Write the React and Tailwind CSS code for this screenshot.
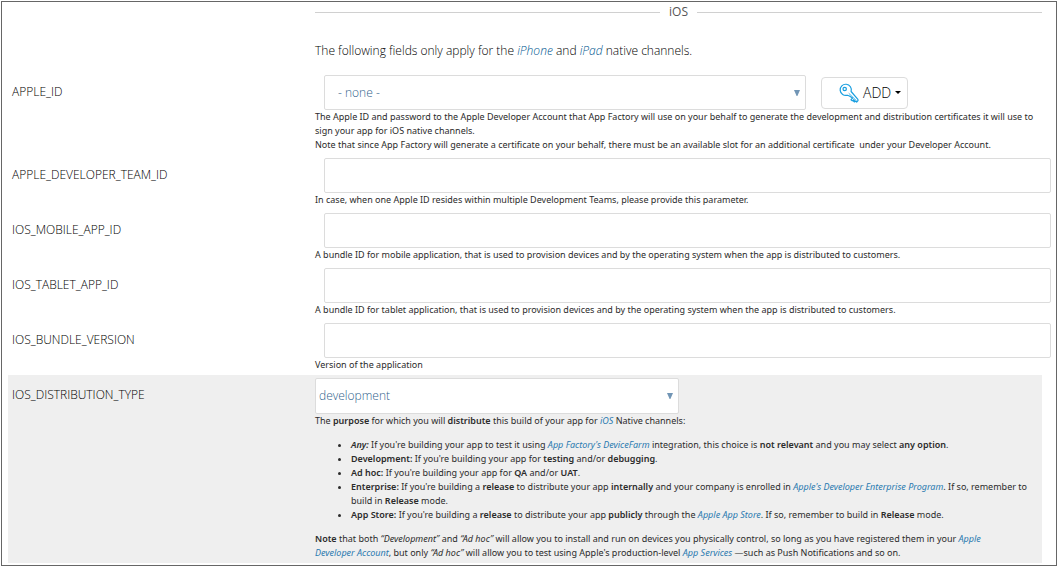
import React from "react";

function Link({ children, className = "text-[#2a7ab0]" }) {
  return (
    <a href="#" className={`italic ${className}`}>
      {children}
    </a>
  );
}

function B({ children }) {
  return <strong className="font-semibold">{children}</strong>;
}

function Arrow() {
  return (
    <svg
      viewBox="0 0 6 6"
      aria-hidden="true"
      className="pointer-events-none absolute top-1/2 right-1.5 h-1.5 w-1.5 -translate-y-1/2"
    >
      <path d="M0 0h6L3.4 6h-.8z" fill="#7195b5" />
    </svg>
  );
}

function KeyIcon() {
  return (
    <svg
      viewBox="0 0 20 20"
      aria-hidden="true"
      className="h-5 w-5"
      fill="none"
      stroke="#1a9fe0"
      strokeWidth="1.2"
      strokeLinejoin="round"
      strokeLinecap="round"
    >
      <path d="M12.1 8.5A5.6 5.6 0 1 0 8.4 12.2L10.4 13l3.2 2-1.6 1.7 1.3 1.2 1.5-1.2.6.6-.8 1 .9.7 1.2-.9 1 .9 1.3-1.3-.1-1.3z" />
      <circle cx="5.7" cy="6" r="1.7" />
      <path d="M10 10.5l7.4 7.2" strokeWidth="0.8" />
    </svg>
  );
}

function Row({ id, label, spacing = "pb-1.5", children }) {
  return (
    <div className={`flex ${spacing}`}>
      <label
        htmlFor={id}
        className="w-[307px] shrink-0 pt-[9px] pl-1 font-['Open_Sans',sans-serif] text-xs leading-4 font-light text-black"
      >
        {label}
      </label>
      <div className="min-w-0 flex-1">{children}</div>
    </div>
  );
}

function TextRow({ id, help, spacing }) {
  return (
    <Row id={id} label={id} spacing={spacing}>
      <div className="-mr-[9px] pl-[9px]">
        <input
          id={id}
          type="text"
          className="block h-[35px] w-full rounded-xs border border-[#dcdcdc] bg-white px-2 text-xs"
        />
      </div>
      <p>{help}</p>
    </Row>
  );
}

export default function App() {
  return (
    <div className="bg-white p-px font-['Noto_Sans','Open_Sans',sans-serif] text-[9px] leading-[14px] text-[#2b2b2b]">
      <main className="border border-[#666] pr-3.5 pb-0.5 pl-1.5">
        <div className="pl-[307px] font-['Open_Sans',sans-serif]">
          <div className="flex h-5 items-center gap-[9px]">
            <div className="h-px flex-1 bg-[#d0d0d0]" />
            <h2 className="text-xs leading-4 text-[#555]">iOS</h2>
            <div className="h-px flex-1 bg-[#d0d0d0]" />
          </div>
          <p className="pt-[21px] pb-4 text-xs leading-4 font-light text-black">
            The following fields only apply for the <Link className="text-[#00568f]">iPhone</Link> and{" "}
            <Link className="text-[#00568f]">iPad</Link> native channels.
          </p>
        </div>

        <Row id="APPLE_ID" label="APPLE_ID">
          <div className="flex items-center gap-[15px] pl-[9px]">
            <div className="relative w-[482px]">
              <select
                id="APPLE_ID"
                className="block h-[35px] w-full appearance-none rounded-xs border border-[#dcdcdc] bg-white px-[13px] font-['Open_Sans',sans-serif] text-xs font-light text-[#2f5f8c]"
              >
                <option>- none -</option>
              </select>
              <Arrow />
            </div>
            <button
              type="button"
              className="flex h-8 w-[87px] items-center gap-1 rounded-sm border border-[#dcdcdc] bg-white pl-[17px] font-['Open_Sans',sans-serif] text-sm font-light text-black"
            >
              <KeyIcon />
              ADD
              <svg viewBox="0 0 6 3" aria-hidden="true" className="h-[3px] w-1.5">
                <path d="M0 0h6L3 3z" fill="#000" />
              </svg>
            </button>
          </div>
          <p>
            The Apple ID and password to the Apple Developer Account that App Factory will use on your
            behalf to generate the development and distribution certificates it will use to sign your app
            for iOS native channels.
            <br />
            Note that since App Factory will generate a certificate on your behalf, there must be an
            available slot for an additional certificate&nbsp; under your Developer Account.
          </p>
        </Row>

        <TextRow
          id="APPLE_DEVELOPER_TEAM_ID"
          help="In case, when one Apple ID resides within multiple Development Teams, please provide this parameter."
        />
        <TextRow
          id="IOS_MOBILE_APP_ID"
          help="A bundle ID for mobile application, that is used to provision devices and by the operating system when the app is distributed to customers."
        />
        <TextRow
          id="IOS_TABLET_APP_ID"
          help="A bundle ID for tablet application, that is used to provision devices and by the operating system when the app is distributed to customers."
        />
        <TextRow id="IOS_BUNDLE_VERSION" help="Version of the application" spacing="pb-[3px]" />

        <Row
          id="IOS_DISTRIBUTION_TYPE"
          label="IOS_DISTRIBUTION_TYPE"
          spacing="bg-[#efefef] pt-[3px] pb-[3px]"
        >
          <div className="relative w-1/2">
            <select
              id="IOS_DISTRIBUTION_TYPE"
              className="block h-9 w-full appearance-none rounded-xs border border-[#dcdcdc] bg-white px-[3px] font-['Open_Sans',sans-serif] text-xs font-light text-[#2f5f8c]"
            >
              <option>development</option>
            </select>
            <Arrow />
          </div>
          <p>
            The <B>purpose</B> for which you will <B>distribute</B> this build of your app for{" "}
            <Link>iOS</Link> Native channels:
          </p>
          <ul className="my-2.5 list-disc pl-9">
            <li>
              <B>
                <em>Any:</em>
              </B>{" "}
              If you're building your app to test it using <Link>App Factory's DeviceFarm</Link>{" "}
              integration, this choice is <B>not relevant</B> and you may select <B>any option</B>.
            </li>
            <li>
              <B>Development:</B> If you're building your app for <B>testing</B> and/or{" "}
              <B>debugging</B>.
            </li>
            <li>
              <B>Ad hoc:</B> If you're building your app for <B>QA</B> and/or <B>UAT</B>.
            </li>
            <li>
              <B>Enterprise:</B> If you're building a <B>release</B> to distribute your app{" "}
              <B>internally</B> and your company is enrolled in{" "}
              <Link>Apple's Developer Enterprise Program</Link>. If so, remember to build in{" "}
              <B>Release</B> mode.
            </li>
            <li>
              <B>App Store:</B> If you're building a <B>release</B> to distribute your app{" "}
              <B>publicly</B> through the <Link>Apple App Store</Link>. If so, remember to build in{" "}
              <B>Release</B> mode.
            </li>
          </ul>
          <p className="pr-8">
            <B>Note</B> that both <em>“Development”</em> and <em>“Ad hoc”</em> will allow you to install
            and run on devices you physically control, so long as you have registered them in your{" "}
            <Link>Apple Developer Account</Link>, but only <em>“Ad hoc”</em> will allow you to test using
            Apple's production-level <Link>App Services</Link> —such as Push Notifications and so on.
          </p>
        </Row>
      </main>
    </div>
  );
}
